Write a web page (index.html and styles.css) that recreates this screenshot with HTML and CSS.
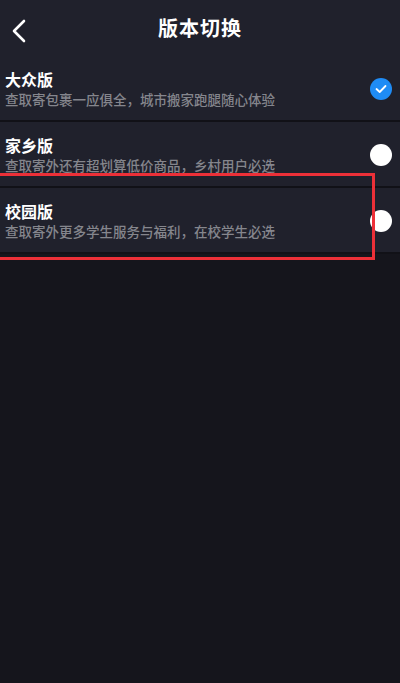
FILE: index.html
```html
<!DOCTYPE html>
<html lang="zh-CN">
<head>
  <meta charset="UTF-8">
  <title>版本切换</title>
  <link rel="stylesheet" href="styles.css">
</head>
<body>
  <div class="header">
    <svg class="back" width="16" height="24" viewBox="0 0 16 24"><path d="M13 2 L3 12 L13 22" fill="none" stroke="#fff" stroke-width="2.6" stroke-linecap="round" stroke-linejoin="round"/></svg>
    <h1>版本切换</h1>
  </div>

  <div class="list">
    <div class="row">
      <div class="text">
        <div class="name">大众版</div>
        <div class="desc">查取寄包裹一应俱全，城市搬家跑腿随心体验</div>
      </div>
      <span class="radio checked">
        <svg width="12" height="10" viewBox="0 0 12 10"><path d="M1.5 5 L4.7 8 L10.5 2" fill="none" stroke="#fff" stroke-width="1.8" stroke-linecap="round" stroke-linejoin="round"/></svg>
      </span>
    </div>
    <div class="row">
      <div class="text">
        <div class="name">家乡版</div>
        <div class="desc">查取寄外还有超划算低价商品，乡村用户必选</div>
      </div>
      <span class="radio"></span>
    </div>
    <div class="row">
      <div class="text">
        <div class="name">校园版</div>
        <div class="desc">查取寄外更多学生服务与福利，在校学生必选</div>
      </div>
      <span class="radio"></span>
    </div>
  </div>

  <div class="mark"></div>
</body>
</html>
```

FILE: styles.css
```css
body { margin: 0; background: #15151c; font-family: "Noto Sans CJK SC", "Noto Sans", sans-serif; color: #fff; height: 683px; overflow: hidden; position: relative; }
.header { height: 56px; background: #20212c; display: flex; align-items: center; justify-content: center; position: relative; }
.back { position: absolute; left: 11px; top: 19px; }
h1 { margin: 0; font-size: 20px; font-weight: 700; letter-spacing: 1px; line-height: 1; }
.list { display: flex; flex-direction: column; gap: 2px; background: #111117; padding-bottom: 2px; }
.row { height: 64px; background: #20212c; display: flex; align-items: center; justify-content: space-between; padding: 0 8px 0 5px; box-sizing: border-box; }
.name { font-size: 16px; font-weight: 700; line-height: 20px; }
.desc { font-size: 13.5px; font-weight: 500; color: #85868d; line-height: 18px; margin-top: 1px; }
.radio { width: 22px; height: 22px; border-radius: 50%; background: #fff; display: flex; align-items: center; justify-content: center; margin-top: 1px; }
.radio.checked { background: #1f8cf5; }
.mark { position: absolute; left: -4px; top: 173px; width: 373px; height: 81px; border: 3.5px solid #ec3038; }
```
